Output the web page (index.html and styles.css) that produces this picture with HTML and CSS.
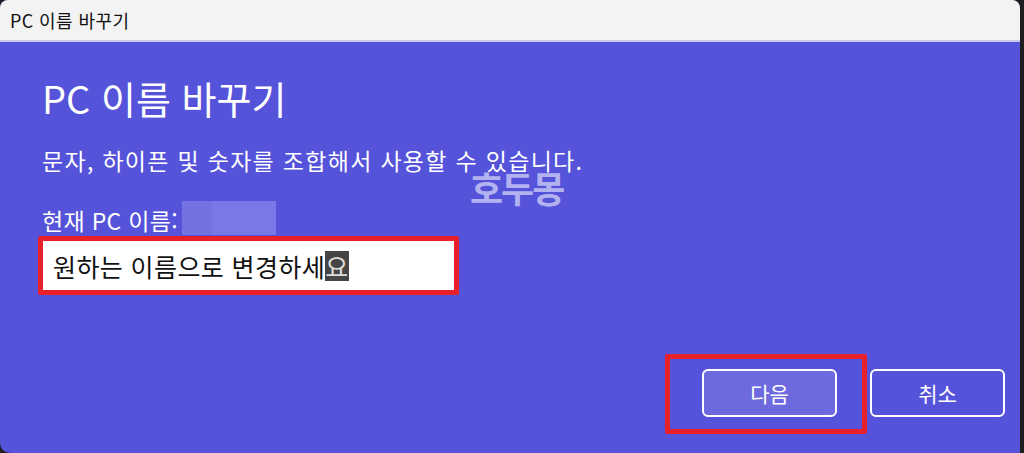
FILE: index.html
```html
<!DOCTYPE html>
<html lang="ko">
<head>
  <meta charset="UTF-8" />
  <meta name="viewport" content="width=device-width, initial-scale=1.0"/>
  <title>PC 이름 바꾸기</title>
  <link rel="stylesheet" href="styles.css">
</head>
<body>
  <div class="window">
    <div class="titlebar">PC 이름 바꾸기</div>

    <div class="content">
      <h1>PC 이름 바꾸기</h1>
      <p class="hint">문자, 하이픈 및 숫자를 조합해서 사용할 수 있습니다.</p>

      <div class="current">
        <span>현재 PC 이름:</span>
        <span class="blur"><span class="blur-a"></span><span class="blur-b"></span></span>
      </div>

      <div class="mark-box input-mark">
        <div class="name-input">원하는 이름으로 변경하세<span class="sel">요</span></div>
      </div>

      <div class="actions">
        <div class="mark-box btn-mark">
          <button class="btn btn-primary">다음</button>
        </div>
        <button class="btn">취소</button>
      </div>
    </div>

    <!-- watermark -->
    <div class="watermark">호두몽</div>
  </div>
</body>
</html>
```

FILE: styles.css
```css
html, body {
  margin: 0;
  height: 100%;
}

body {
  background: #1e1e22;
  font-family: "Noto Sans CJK KR", "Noto Sans", sans-serif;
  overflow: hidden;
}

.window {
  position: relative;
  width: 1020px;
  height: 453px;
  background: #5553d9;
  border-radius: 8px 8px 0 10px;
  overflow: hidden;
}

.titlebar {
  height: 42px;
  background: #f3f3f3;
  border-bottom: 2px solid #c9c8ee;
  box-sizing: border-box;
  padding-left: 10px;
  display: flex;
  align-items: center;
  font-size: 18px;
  letter-spacing: 0.4px;
  color: #111;
}

.content {
  padding: 32px 15px 0 38px;
  color: #fff;
}

h1 {
  margin: 0 0 0 4px;
  font-size: 38px;
  font-weight: 400;
  line-height: 48px;
}

.hint {
  margin: 23px 0 0 4px;
  font-size: 23px;
  letter-spacing: 1.3px;
  line-height: 30px;
}

.current {
  margin: 26px 0 0 4px;
  display: flex;
  align-items: flex-end;
  font-size: 23px;
  letter-spacing: 0.3px;
  line-height: 30px;
}

.blur {
  display: flex;
  height: 34px;
  margin-left: 4px;
}

.blur-a {
  width: 30px;
  background: #7471e2;
}

.blur-b {
  width: 64px;
  background: #7a77e6;
}

.mark-box {
  border: 5px solid #e8202a;
  border-radius: 2px;
  box-sizing: border-box;
}

.input-mark {
  width: 421px;
  margin-top: 1px;
}

.name-input {
  height: 49px;
  background: #fff;
  color: #111;
  font-size: 25px;
  letter-spacing: 0.4px;
  display: flex;
  align-items: center;
  padding-left: 10px;
}

.sel {
  background: #454545;
  color: #ddd;
  line-height: 30px;
}

.actions {
  display: flex;
  justify-content: flex-end;
  align-items: flex-start;
  gap: 3px;
  margin-top: 59px;
}

.btn-mark {
  width: 202px;
  height: 80px;
  padding: 10px 0 0 32px;
}

.btn {
  width: 135px;
  height: 48px;
  border: 2px solid #fff;
  border-radius: 6px;
  background: #5553d9;
  color: #fff;
  font-family: inherit;
  font-size: 21px;
  margin-top: 15px;
}

.btn-primary {
  background: #6d69de;
  margin-top: 0;
}

.watermark {
  position: absolute;
  left: 470px;
  top: 161px;
  font-size: 36px;
  font-weight: 700;
  color: rgba(210, 210, 248, 0.75);
  letter-spacing: -2px;
}
```
